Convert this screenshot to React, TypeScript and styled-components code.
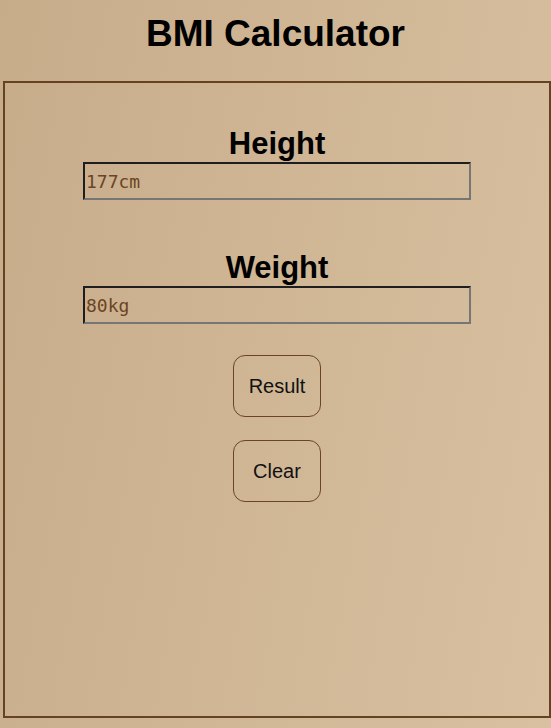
import React from "react";
import styled, { createGlobalStyle } from "styled-components";

const GlobalStyle = createGlobalStyle`
  html, body {
    margin: 0;
    padding: 0;
    min-height: 100%;
  }
  body {
    width: 551px;
    height: 728px;
    overflow: hidden;
    background: linear-gradient(100deg, #c7ac8a 0%, #d8c0a0 100%);
    font-family: "Liberation Sans", Arial, sans-serif;
  }
`;

const Page = styled.div`
  display: flex;
  flex-direction: column;
  align-items: flex-start;
`;

const Title = styled.h1`
  align-self: stretch;
  margin: 12.5px 0 26px;
  font-size: 37px;
  font-weight: bold;
  text-align: center;
  color: #000;
  line-height: normal;
`;

const Card = styled.div`
  box-sizing: border-box;
  margin-left: 3px;
  width: 548px;
  height: 637px;
  border: 2px solid #654321;
  padding-top: 44px;
  display: flex;
  flex-direction: column;
  align-items: center;
`;

const Field = styled.div<{ $gap: number }>`
  display: flex;
  flex-direction: column;
  align-items: center;
  gap: 2px;
  margin-bottom: ${(p) => p.$gap}px;
`;

const Label = styled.label`
  font-size: 31px;
  font-weight: bold;
  line-height: 33.6px;
  color: #000;
`;

const Input = styled.input`
  box-sizing: border-box;
  width: 388px;
  height: 38px;
  margin: 0;
  padding: 1px 1px;
  border-width: 2px;
  border-style: solid;
  border-color: #1e1e1e #767676 #767676 #1e1e1e;
  background: transparent;
  font-family: "DejaVu Sans Mono", "Liberation Mono", monospace;
  font-size: 18px;
  color: #6b4423;
  outline: none;
  &::placeholder {
    color: #6b4423;
    opacity: 1;
  }
`;

const Button = styled.button<{ $mb: number }>`
  box-sizing: border-box;
  width: 88px;
  height: 62px;
  margin: 0 0 ${(p) => p.$mb}px;
  padding: 0;
  border: 1px solid #6b4423;
  border-radius: 12px;
  background: transparent;
  font-family: "Liberation Sans", Arial, sans-serif;
  font-size: 20px;
  color: #111;
  cursor: pointer;
`;

export default function App() {
  return (
    <>
      <GlobalStyle />
      <Page>
        <Title>BMI Calculator</Title>
        <Card>
          <Field $gap={50.5}>
            <Label htmlFor="h">Height</Label>
            <Input id="h" type="text" placeholder="177cm" />
          </Field>
          <Field $gap={31}>
            <Label htmlFor="w">Weight</Label>
            <Input id="w" type="text" placeholder="80kg" />
          </Field>
          <Button $mb={23}>Result</Button>
          <Button $mb={0}>Clear</Button>
        </Card>
      </Page>
    </>
  );
}
